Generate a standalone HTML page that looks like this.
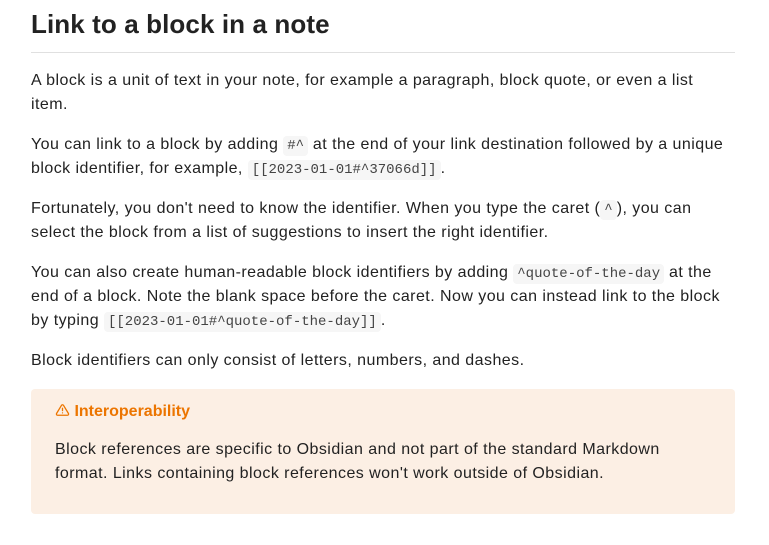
<!DOCTYPE html>
<html><head><meta charset="utf-8"><style>
body{margin:0;background:#fff;font-family:"Liberation Sans",sans-serif;color:#222;width:769px;height:545px;overflow:hidden}
.w{position:absolute;left:31px;width:704px;top:0}
h1{margin:0;position:absolute;top:8px;font-size:26px;font-weight:bold;line-height:32px;letter-spacing:0.1px}
.hr{position:absolute;top:52px;left:0;width:704px;height:1px;background:#e0e0e0}
p{position:absolute;left:0;width:740px;margin:0;font-size:16px;line-height:24px;letter-spacing:0.45px;white-space:nowrap}
code{font-family:"Liberation Mono",monospace;font-size:14px;line-height:16px;background:#f6f6f6;padding:2px 4px;border-radius:4px;color:#444;letter-spacing:0}
.c{position:absolute;top:389px;left:0;width:704px;height:125px;background:#fcefe4;border-radius:4px}
.t{position:absolute;left:24px;top:12px;color:#ec7500;font-weight:bold;font-size:16px;line-height:22px}
.c p{left:24px;width:680px;top:49px}
</style></head><body><div class="w">
<h1>Link to a block in a note</h1>
<div class="hr"></div>
<p style="top:69px">A block is a unit of text in your note, for example a paragraph, block quote, or even a list<br>item.</p>
<p style="top:133px">You can link to a block by adding <code>#^</code> at the end of your link destination followed by a unique<br>block identifier, for example, <code>[[2023-01-01#^37066d]]</code>.</p>
<p style="top:197px">Fortunately, you don't need to know the identifier. When you type the caret (<code>^</code>), you can<br>select the block from a list of suggestions to insert the right identifier.</p>
<p style="top:261px">You can also create human-readable block identifiers by adding <code>^quote-of-the-day</code> at the<br>end of a block. Note the blank space before the caret. Now you can instead link to the block<br>by typing <code>[[2023-01-01#^quote-of-the-day]]</code>.</p>
<p style="top:349px">Block identifiers can only consist of letters, numbers, and dashes.</p>
<div class="c"><div class="t"><svg width="15" height="14" viewBox="0 0 24 24" fill="none" stroke="#ec7500" stroke-width="2.2" stroke-linecap="round" stroke-linejoin="round" style="vertical-align:-1px"><path d="M10.3 3.9 1.8 18a2 2 0 0 0 1.7 3h17a2 2 0 0 0 1.7-3L13.7 3.9a2 2 0 0 0-3.4 0z"/><path d="M12 9v4M12 17h.01"/></svg> Interoperability</div>
<p>Block references are specific to Obsidian and not part of the standard Markdown<br>format. Links containing block references won't work outside of Obsidian.</p></div>
</div></body></html>
